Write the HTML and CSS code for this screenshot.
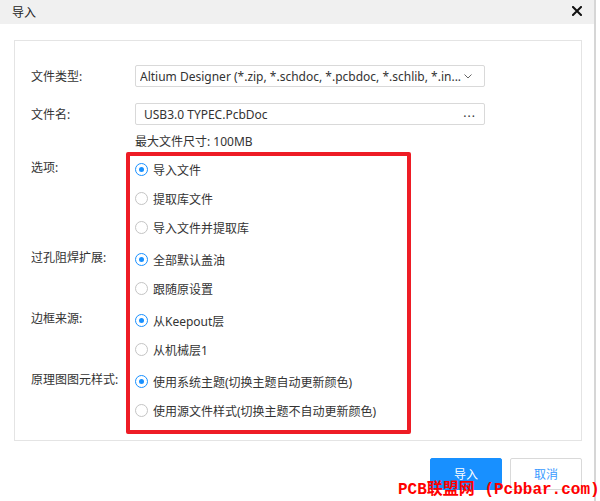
FILE: index.html
```html
<!DOCTYPE html>
<html lang="zh-CN">
<head>
    <meta charset="UTF-8">
    <title>导入</title>
    <link rel="stylesheet" href="styles.css">
</head>
<body>
    <div class="dialog">
        <div class="dialog-header">
            <span class="dialog-title">导入</span>
            <svg class="close-icon" width="10" height="10" viewBox="0 0 10 10">
                <path d="M1 1 L9 9 M9 1 L1 9" stroke="#111" stroke-width="2" stroke-linecap="square"/>
            </svg>
        </div>

        <div class="dialog-body">
            <div class="panel">
                <div class="form-row">
                    <div class="form-label">文件类型:</div>
                    <div class="select-box">
                        <span class="select-text">Altium Designer (*.zip, *.schdoc, *.pcbdoc, *.schlib, *.in...</span>
                        <svg class="chevron" width="8" height="5" viewBox="0 0 8 5">
                            <polyline points="0.5,0.5 4,4 7.5,0.5" fill="none" stroke="#666" stroke-width="1"/>
                        </svg>
                    </div>
                </div>

                <div class="form-row row-file">
                    <div class="form-label">文件名:</div>
                    <div class="input-box">
                        <span class="input-text">USB3.0 TYPEC.PcbDoc</span>
                        <span class="input-more">...</span>
                    </div>
                </div>

                <div class="hint">最大文件尺寸: 100MB</div>

                <div class="option-group first-group">
                    <div class="form-label group-label">选项:</div>
                    <div class="radio-list">
                        <div class="radio checked"><span class="radio-dot"></span>导入文件</div>
                        <div class="radio"><span class="radio-dot"></span>提取库文件</div>
                        <div class="radio"><span class="radio-dot"></span>导入文件并提取库</div>
                    </div>
                </div>

                <div class="option-group">
                    <div class="form-label group-label">过孔阻焊扩展:</div>
                    <div class="radio-list">
                        <div class="radio checked"><span class="radio-dot"></span>全部默认盖油</div>
                        <div class="radio"><span class="radio-dot"></span>跟随原设置</div>
                    </div>
                </div>

                <div class="option-group">
                    <div class="form-label group-label">边框来源:</div>
                    <div class="radio-list">
                        <div class="radio checked"><span class="radio-dot"></span>从Keepout层</div>
                        <div class="radio"><span class="radio-dot"></span>从机械层1</div>
                    </div>
                </div>

                <div class="option-group">
                    <div class="form-label group-label">原理图图元样式:</div>
                    <div class="radio-list">
                        <div class="radio checked"><span class="radio-dot"></span>使用系统主题(切换主题自动更新颜色)</div>
                        <div class="radio"><span class="radio-dot"></span>使用源文件样式(切换主题不自动更新颜色)</div>
                    </div>
                </div>
            </div>

            <div class="dialog-footer">
                <button class="btn btn-primary">导入</button>
                <button class="btn btn-default">取消</button>
            </div>
        </div>

        <!-- red annotation box drawn over the options -->
        <div class="highlight-box"></div>
        <div class="watermark">PCB联盟网 (Pcbbar.com)</div>
    </div>
</body>
</html>
```

FILE: styles.css
```css
body {
    margin: 0;
    padding: 0;
    background: #fff;
    font-family: "Noto Sans", "Noto Sans CJK SC", sans-serif;
    font-size: 12px;
    color: #333;
    width: 600px;
    height: 501px;
    overflow: hidden;
}

.dialog {
    position: relative;
    width: 594px;
    height: 501px;
    border-right: 2px solid #d6d6d6;
    background: #fff;
}

.dialog-header {
    height: 24px;
    background: #f0f0f0;
    display: flex;
    align-items: center;
    justify-content: space-between;
    padding: 0 12px 0 12px;
}

.dialog-title {
    font-size: 12px;
    color: #222;
}

.close-icon {
    margin-top: -2px;
}

.dialog-body {
    padding: 16px 12px 0 14px;
}

.panel {
    border: 1px solid #e4e4e4;
    padding: 24px 16px 0 16px;
    box-sizing: border-box;
    height: 401px;
}

.form-row {
    display: flex;
    align-items: center;
    height: 22px;
}

.row-file {
    margin-top: 16px;
}

.form-label {
    width: 104px;
    flex-shrink: 0;
    color: #333;
}

.select-box,
.input-box {
    width: 350px;
    height: 22px;
    box-sizing: border-box;
    border: 1px solid #d9d9d9;
    border-radius: 2px;
    display: flex;
    align-items: center;
    justify-content: space-between;
}

.select-box {
    padding: 0 12px 0 4px;
}

.input-box {
    padding: 0 8px 0 8px;
}

.select-text,
.input-text {
    white-space: nowrap;
    overflow: hidden;
    color: #333;
}

.input-more {
    letter-spacing: 1px;
    margin-top: -4px;
}

.hint {
    margin: 9px 0 0 104px;
    line-height: 16px;
}

.option-group {
    display: flex;
    margin-top: 3px;
}

.first-group {
    margin-top: 5px;
}

.group-label {
    line-height: 26px;
}

.radio-list {
    display: flex;
    flex-direction: column;
}

.radio {
    height: 29px;
    display: flex;
    align-items: center;
    white-space: nowrap;
}

.radio-dot {
    width: 13px;
    height: 13px;
    box-sizing: border-box;
    border: 1px solid #c4c4c4;
    border-radius: 50%;
    margin-right: 5px;
    display: flex;
    align-items: center;
    justify-content: center;
    background: #fff;
}

.radio.checked .radio-dot {
    border-color: #1890ff;
}

.radio.checked .radio-dot::after {
    content: "";
    width: 5px;
    height: 5px;
    border-radius: 50%;
    background: #1890ff;
}

.dialog-footer {
    display: flex;
    justify-content: flex-end;
    gap: 8px;
    margin-top: 17px;
}

.btn {
    width: 72px;
    height: 32px;
    border-radius: 2px;
    font-family: "Noto Sans", "Noto Sans CJK SC", sans-serif;
    font-size: 12px;
    cursor: pointer;
}

.btn-primary {
    background: #1890ff;
    border: 1px solid #1890ff;
    color: #fff;
}

.btn-default {
    background: #fff;
    border: 1px solid #d9d9d9;
    color: #3a9bff;
}

.highlight-box {
    position: absolute;
    left: 126px;
    top: 152px;
    width: 285px;
    height: 282px;
    box-sizing: border-box;
    border: 4px solid #ee1c25;
    border-radius: 2px;
}

.watermark {
    position: absolute;
    left: 398px;
    top: 475px;
    font-family: "Liberation Mono", "Noto Sans CJK SC", monospace;
    font-weight: bold;
    font-size: 16px;
    color: #ff0000;
    white-space: nowrap;
}
```
